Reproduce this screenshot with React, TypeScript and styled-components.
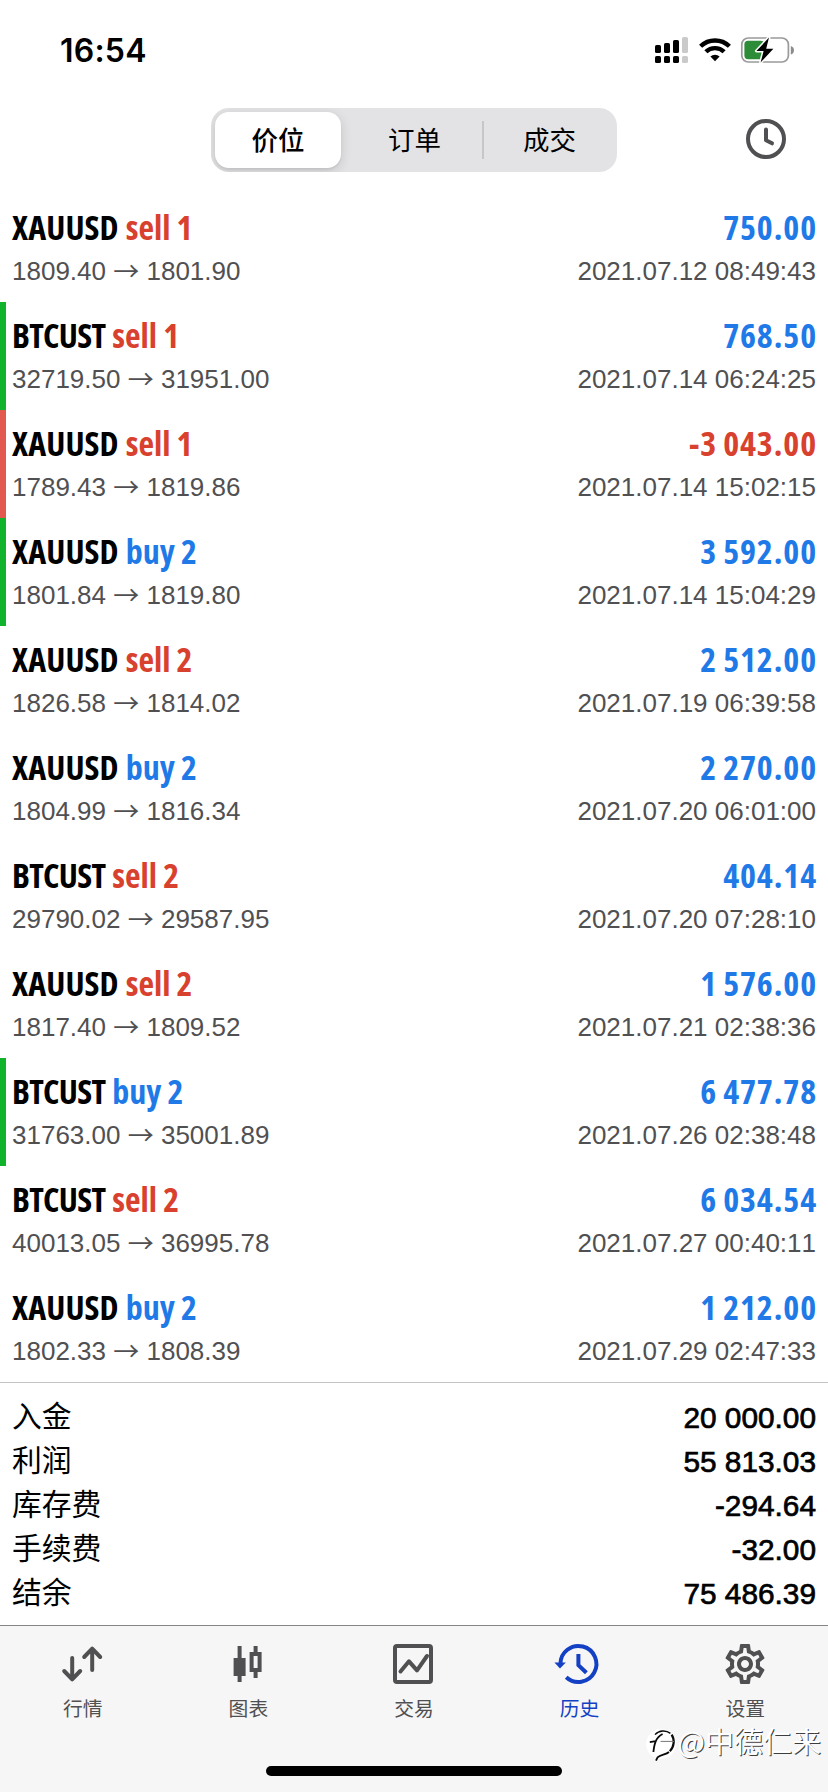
import React from "react";
import styled, { createGlobalStyle } from "styled-components";
import { MdOutlineSettings } from "react-icons/md";

const BLUE = "#1f7ae8";
const RED = "#d9412f";
const GREEN = "#12b32c";

const GlobalStyle = createGlobalStyle`
  *, *::before, *::after { box-sizing: border-box; }
  html, body { margin: 0; padding: 0; background: #fff; }
  body { font-family: "Liberation Sans", "Noto Sans CJK SC", sans-serif; color: #000; }
  svg { display: block; overflow: visible; }
`;

const Screen = styled.div`
  position: relative;
  width: 828px;
  height: 1792px;
  display: flex;
  flex-direction: column;
  background: #fff;
  overflow: hidden;
`;

const StatusBar = styled.header`
  flex: none;
  height: 94px;
  padding: 5px 34px 0 60px;
  display: flex;
  align-items: center;
  justify-content: space-between;
`;

const Clock = styled.time`
  padding-top: 2px;
  font: 600 32px/40px Inter, sans-serif;
  letter-spacing: 0.2px;
`;

const StatusIcons = styled.div`
  display: flex;
  align-items: center;
  gap: 10px;
`;

const NavBar = styled.nav`
  flex: none;
  height: 100px;
  padding: 14px 42px 0 211px;
  display: flex;
  align-items: flex-start;
  justify-content: space-between;
`;

const Segments = styled.div`
  width: 406px;
  height: 64px;
  padding: 4px 0 4px 4px;
  display: grid;
  grid-template-columns: 132px 135px 135px;
  border-radius: 18px;
  background: #e3e3e5;
`;

const Segment = styled.button<{ $active?: boolean; $divided?: boolean }>`
  border: 0;
  padding: 0 0 2px;
  width: ${(p) => (p.$active ? "126px" : "auto")};
  display: flex;
  align-items: center;
  justify-content: center;
  border-radius: ${(p) => (p.$active ? "14px" : "0")};
  background: ${(p) => (p.$active ? "#fff" : p.$divided ? "linear-gradient(#c6c6c8, #c6c6c8) 0 50% / 2px 38px no-repeat" : "transparent")};
  box-shadow: ${(p) => (p.$active ? "0 3px 12px rgba(0,0,0,.14), 0 2px 2px rgba(0,0,0,.05)" : "none")};
  clip-path: ${(p) => (p.$active ? "inset(-4px -20px -4px -4px round 18px)" : "none")};
  color: #000;
  font: ${(p) => (p.$active ? 500 : 400)} 26.5px/40px "Noto Sans CJK SC", sans-serif;
`;

const PeriodButton = styled.button`
  border: 0;
  padding: 11px 0 0;
  background: none;
`;

const DealList = styled.main`
  flex: none;
  display: flex;
  flex-direction: column;
`;

const DealRow = styled.article<{ $mark?: string }>`
  height: 108px;
  padding: 13px 12px 0 6px;
  border-left: 6px solid ${(p) => p.$mark ?? "transparent"};
  display: flex;
  flex-direction: column;
`;

const DealLine = styled.div`
  display: flex;
  justify-content: space-between;
  white-space: nowrap;
`;

const Title = styled.h2`
  margin: 0;
  display: flex;
  gap: 7px;
  font: 670 34px/40px "Open Sans", sans-serif;
  font-stretch: 75%;
  height: 49px;
`;

const Symbol = styled.span<{ $tight: boolean }>`
  letter-spacing: ${(p) => (p.$tight ? "-0.7px" : "0.1px")};
`;

const Side = styled.span<{ $buy: boolean }>`
  color: ${(p) => (p.$buy ? BLUE : RED)};
`;

const Amount = styled.span<{ $loss: boolean }>`
  color: ${(p) => (p.$loss ? RED : BLUE)};
  font: 680 34px/40px "Open Sans", sans-serif;
  font-stretch: 75%;
  letter-spacing: 0.9px;
  word-spacing: -1px;
  margin-right: -1px;
`;

const Detail = styled.span`
  color: #505052;
  font-size: 26px;
  line-height: 30px;
  font-kerning: none;
`;

const Arrow = styled.span`
  font-family: "Noto Sans CJK SC", sans-serif;
  line-height: 1;
  vertical-align: -1px;
`;

const Summary = styled.section`
  flex: none;
  height: 243px;
  padding: 9px 12px 0;
  border-top: 1px solid #c4c4c6;
`;

const SummaryRow = styled.div`
  height: 44px;
  display: flex;
  align-items: center;
  justify-content: space-between;
`;

const SummaryLabel = styled.span`
  font: 400 29.8px/44px "Noto Sans CJK SC", sans-serif;
`;

const SummaryValue = styled.span`
  padding-top: 7px;
  font-size: 29.8px;
  line-height: 40px;
  font-kerning: none;
  -webkit-text-stroke: 0.7px #000;
`;

const TabBar = styled.footer`
  flex: 1;
  border-top: 1px solid #858585;
  background: #f6f6f6;
  display: flex;
  flex-direction: column;
  align-items: center;
  justify-content: space-between;
  padding-bottom: 16px;
`;

const Tabs = styled.div`
  width: 100%;
  display: grid;
  grid-template-columns: repeat(5, 1fr);
`;

const Tab = styled.button<{ $active?: boolean }>`
  border: 0;
  padding: 14px 0 0;
  background: none;
  display: flex;
  flex-direction: column;
  align-items: center;
  gap: 6px;
  color: ${(p) => (p.$active ? "#1440c4" : "#505052")};
`;

const TabLabel = styled.span`
  font: 400 19.8px/28px "Noto Sans CJK SC", sans-serif;
`;

const HomeIndicator = styled.div`
  width: 296px;
  height: 10px;
  border-radius: 5px;
  background: #000;
`;

const Watermark = styled.div`
  position: absolute;
  right: 7px;
  bottom: 31px;
  display: flex;
  align-items: flex-start;
  gap: 2px;
  color: #fff;
  font: 400 29px/36px "Noto Sans CJK SC", sans-serif;
  text-shadow: 1px 1px 0.6px rgba(0, 0, 0, 0.75);

  svg { margin-top: 7px; }
`;

const SignalIcon = () => (
  <svg width="34" height="26" viewBox="0 0 34 26">
    <rect x="0" y="8" width="6" height="8" rx="1.6" />
    <rect x="9" y="6" width="6" height="10" rx="1.6" />
    <rect x="18" y="3" width="6" height="13" rx="1.6" />
    <rect x="27" y="0" width="6" height="16" rx="1.6" fill="#cacaca" />
    <rect x="0" y="19" width="6" height="7" rx="1.6" />
    <rect x="9" y="19" width="6" height="7" rx="1.6" />
    <rect x="18" y="19" width="6" height="7" rx="1.6" />
    <rect x="27" y="19" width="6" height="7" rx="1.6" fill="#cacaca" />
  </svg>
);

const WifiIcon = () => (
  <svg width="32" height="26" viewBox="0 0 32 26" fill="none" stroke="#000" strokeWidth="4.4">
    <path d="M1.6 9.3a20.6 20.6 0 0 1 28.8 0" />
    <path d="M6.9 14.8a13 13 0 0 1 18.2 0" />
    <path d="M11.4 19.6a6.6 6.6 0 0 1 9.2 0L16 24.2z" fill="#000" stroke="none" />
  </svg>
);

const BatteryIcon = () => (
  <svg width="53" height="26" viewBox="0 0 53 26">
    <rect x="0.8" y="1" width="46.6" height="24" rx="6.5" fill="none" stroke="#9a9a9a" strokeWidth="1.7" />
    <path d="M49.8 9v8.6a4.5 4.5 0 0 0 0-8.6z" fill="#8c8c8c" />
    <rect x="3.4" y="3.8" width="20" height="18.4" rx="3.6" fill="#2c8c38" />
    <path d="M28 .6 15.4 14h7.2l-3 11.4L32.4 11.8h-7.2z" fill="#000" stroke="#fff" strokeWidth="3" paintOrder="stroke" strokeLinejoin="round" />
  </svg>
);

const ClockIcon = () => (
  <svg width="40" height="40" viewBox="0 0 40 40" fill="none" stroke="#505052" strokeWidth="4" strokeLinecap="round" strokeLinejoin="round">
    <circle cx="20" cy="20" r="18" />
    <path d="M20 10.5V21.3L26 24.3" />
  </svg>
);

const QuotesIcon = () => (
  <svg width="48" height="48" viewBox="0 0 48 48" fill="none" stroke="currentColor" strokeWidth="4" strokeLinecap="round" strokeLinejoin="round">
    <path d="M13.2 18v21M5.2 31l8 8.4 8-8.4M33.2 30V8.8M25.2 17l8-8.4 8 8.4" />
  </svg>
);

const CandlesIcon = () => (
  <svg width="48" height="48" viewBox="0 0 48 48" fill="currentColor">
    <path d="M13.6 6h4v12h4v18h-4v6h-4v-6h-4V18h4z" />
    <path fillRule="evenodd" d="M29.6 6h4v6h4v20h-4v6h-4v-6h-4V12h4zm0 10v12h4V16z" />
  </svg>
);

const TradeIcon = () => (
  <svg width="48" height="48" viewBox="0 0 48 48" fill="none" stroke="currentColor" strokeWidth="4">
    <rect x="5" y="6" width="36" height="36" rx="2" />
    <path d="M10.5 31.5 19 21.3l8 9L37 16" strokeLinecap="round" strokeLinejoin="round" />
  </svg>
);

const HistoryIcon = () => (
  <svg width="48" height="48" viewBox="0 0 48 48" fill="none" stroke="currentColor" strokeWidth="4">
    <path d="M4.4 24A18 18 0 1 1 10.2 37.2" />
    <path d="M-1.6 22.4h11.4L4 28.4z" fill="currentColor" stroke="none" />
    <path d="M22.4 14v11.2l8 7.6" />
  </svg>
);

const BrandMark = () => (
  <svg width="30" height="32" viewBox="0 0 30 32" fill="none" stroke="#0a0a0a">
    <circle cx="15" cy="15" r="15" fill="#fff" stroke="none" />
    <path d="M9 5.6C13 1.2 20 .8 24.4 4.4" strokeWidth="1.4" />
    <path d="M25.6 5.6c3.4 5 2.6 12.4-1.8 16.6" strokeWidth="2.2" />
    <path d="M23 23c-3 2.8-8.6 2.6-11.4 5.4L10 31.6" strokeWidth="1.8" />
    <path d="M3.8 13.2 9.6 12.2M7.4 23C8.2 15.6 9.4 8.6 16.6 5" strokeWidth="1.8" />
    <path d="M14.6 12.4H28" stroke="#777" strokeWidth="1" />
  </svg>
);

interface Deal {
  symbol: string;
  side: string;
  open: string;
  close: string;
  amount: string;
  time: string;
  mark?: string;
}

const deals: Deal[] = [
  { symbol: "XAUUSD", side: "sell 1", open: "1809.40", close: "1801.90", amount: "750.00", time: "2021.07.12 08:49:43" },
  { symbol: "BTCUST", side: "sell 1", open: "32719.50", close: "31951.00", amount: "768.50", time: "2021.07.14 06:24:25", mark: GREEN },
  { symbol: "XAUUSD", side: "sell 1", open: "1789.43", close: "1819.86", amount: "-3 043.00", time: "2021.07.14 15:02:15", mark: "#e2594f" },
  { symbol: "XAUUSD", side: "buy 2", open: "1801.84", close: "1819.80", amount: "3 592.00", time: "2021.07.14 15:04:29", mark: GREEN },
  { symbol: "XAUUSD", side: "sell 2", open: "1826.58", close: "1814.02", amount: "2 512.00", time: "2021.07.19 06:39:58" },
  { symbol: "XAUUSD", side: "buy 2", open: "1804.99", close: "1816.34", amount: "2 270.00", time: "2021.07.20 06:01:00" },
  { symbol: "BTCUST", side: "sell 2", open: "29790.02", close: "29587.95", amount: "404.14", time: "2021.07.20 07:28:10" },
  { symbol: "XAUUSD", side: "sell 2", open: "1817.40", close: "1809.52", amount: "1 576.00", time: "2021.07.21 02:38:36" },
  { symbol: "BTCUST", side: "buy 2", open: "31763.00", close: "35001.89", amount: "6 477.78", time: "2021.07.26 02:38:48", mark: GREEN },
  { symbol: "BTCUST", side: "sell 2", open: "40013.05", close: "36995.78", amount: "6 034.54", time: "2021.07.27 00:40:11" },
  { symbol: "XAUUSD", side: "buy 2", open: "1802.33", close: "1808.39", amount: "1 212.00", time: "2021.07.29 02:47:33" },
];

const totals = [
  ["入金", "20 000.00"],
  ["利润", "55 813.03"],
  ["库存费", "-294.64"],
  ["手续费", "-32.00"],
  ["结余", "75 486.39"],
];

export default function App() {
  return (
    <Screen>
      <GlobalStyle />
      <StatusBar>
        <Clock>16:54</Clock>
        <StatusIcons>
          <SignalIcon />
          <WifiIcon />
          <BatteryIcon />
        </StatusIcons>
      </StatusBar>
      <NavBar>
        <Segments>
          <Segment $active>价位</Segment>
          <Segment>订单</Segment>
          <Segment $divided>成交</Segment>
        </Segments>
        <PeriodButton>
          <ClockIcon />
        </PeriodButton>
      </NavBar>
      <DealList>
        {deals.map((d) => (
          <DealRow key={d.time} $mark={d.mark}>
            <DealLine>
              <Title>
                <Symbol $tight={d.symbol.startsWith("BTC")}>{d.symbol}</Symbol>
                <Side $buy={d.side.startsWith("buy")}>{d.side}</Side>
              </Title>
              <Amount $loss={d.amount.startsWith("-")}>{d.amount}</Amount>
            </DealLine>
            <DealLine>
              <Detail>
                {d.open} <Arrow>→</Arrow> {d.close}
              </Detail>
              <Detail>{d.time}</Detail>
            </DealLine>
          </DealRow>
        ))}
      </DealList>
      <Summary>
        {totals.map(([label, value]) => (
          <SummaryRow key={label}>
            <SummaryLabel>{label}</SummaryLabel>
            <SummaryValue>{value}</SummaryValue>
          </SummaryRow>
        ))}
      </Summary>
      <TabBar>
        <Tabs>
          <Tab>
            <QuotesIcon />
            <TabLabel>行情</TabLabel>
          </Tab>
          <Tab>
            <CandlesIcon />
            <TabLabel>图表</TabLabel>
          </Tab>
          <Tab>
            <TradeIcon />
            <TabLabel>交易</TabLabel>
          </Tab>
          <Tab $active>
            <HistoryIcon />
            <TabLabel>历史</TabLabel>
          </Tab>
          <Tab>
            <MdOutlineSettings size={48} />
            <TabLabel>设置</TabLabel>
          </Tab>
        </Tabs>
        <HomeIndicator />
      </TabBar>
      <Watermark>
        <BrandMark />
        <span>@中德仁来</span>
      </Watermark>
    </Screen>
  );
}
